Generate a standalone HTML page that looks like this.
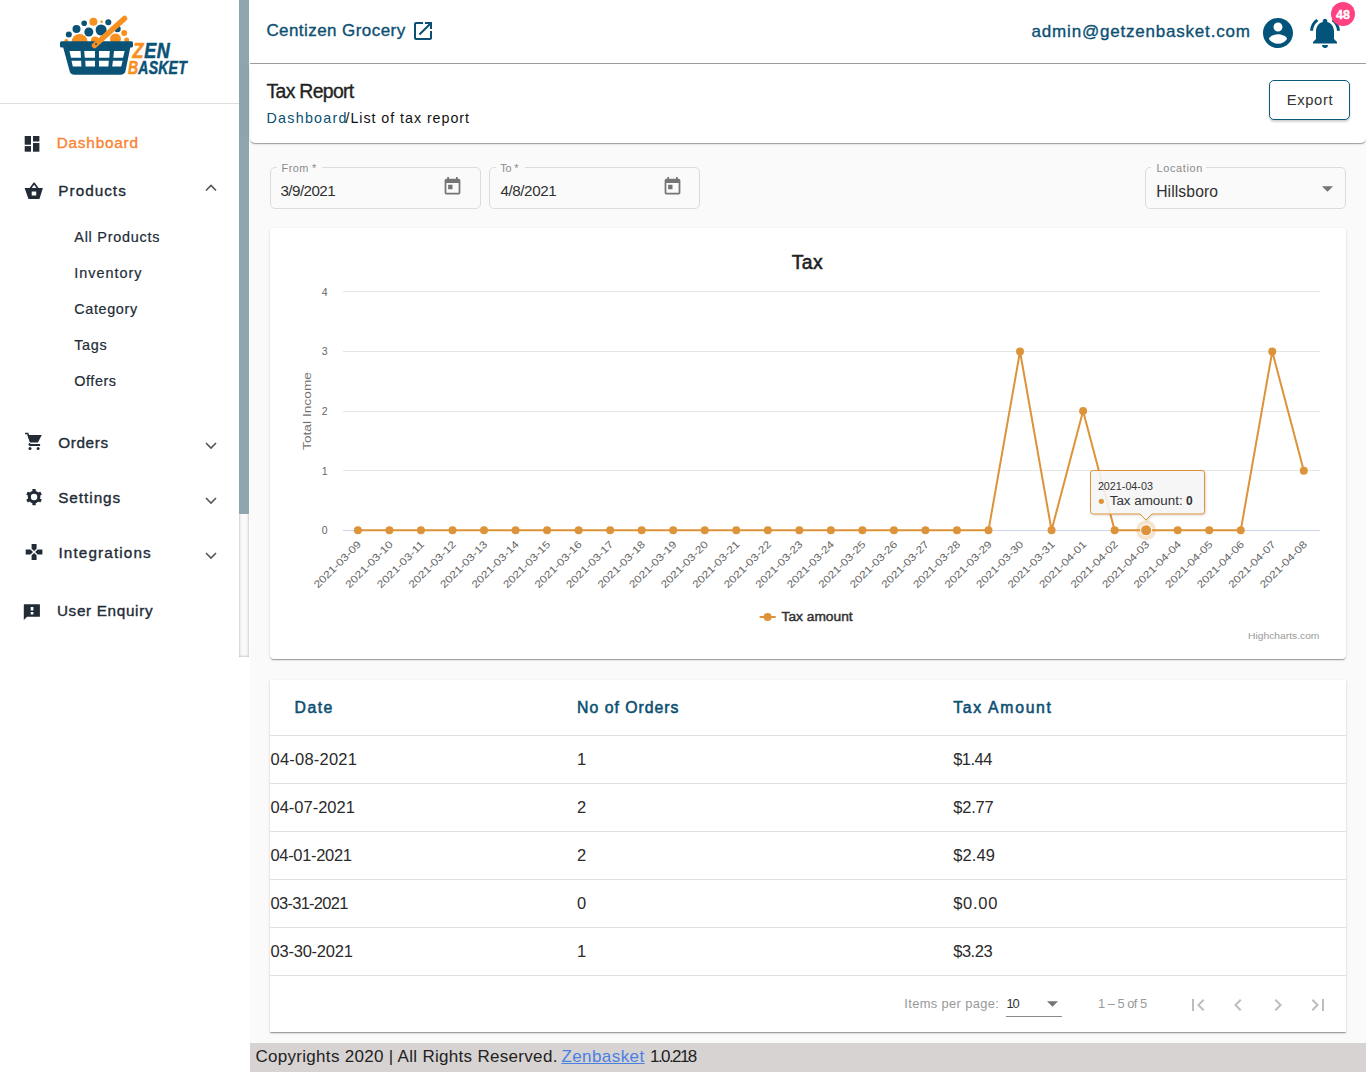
<!DOCTYPE html>
<html><head><meta charset="utf-8"><title>Tax Report</title>
<style>
html,body{margin:0;padding:0;width:1366px;height:1072px;overflow:hidden;background:#fafafa;font-family:"Liberation Sans",sans-serif;}
.t{position:absolute;line-height:0;white-space:nowrap;}
.abs{position:absolute;}
#sidebar{position:absolute;left:0;top:0;width:250px;height:1072px;background:#fff;}
#sbdiv{position:absolute;left:0;top:103px;width:239px;height:1px;background:#dedede;}
#sbtrack{position:absolute;left:239px;top:0;width:10px;height:657px;background:#fafafa;box-shadow:inset 0 0 3px rgba(0,0,0,.35);}
#sbthumb{position:absolute;left:239px;top:0;width:10px;height:514px;background:#90a4ae;}
#header{position:absolute;left:250px;top:0;width:1116px;height:63px;background:#fff;border-bottom:1px solid #9e9e9e;}
#taxcard{position:absolute;left:250px;top:64px;width:1116px;height:79px;background:#fff;border-radius:0 0 5px 5px;box-shadow:0 2px 1px -1px rgba(0,0,0,.2),0 1px 1px 0 rgba(0,0,0,.14),0 1px 3px 0 rgba(0,0,0,.12);}
#export{position:absolute;left:1269px;top:80px;width:79px;height:38px;border:1px solid #0b5a7e;border-radius:5px;background:#fff;box-shadow:0 2px 2px rgba(0,0,0,.18);}
.field{position:absolute;top:167px;height:40px;border:1px solid #dcdcdc;border-radius:5px;}
.gap{position:absolute;top:163px;height:8px;background:#fafafa;}
.card{position:absolute;background:#fff;border-radius:4px;box-shadow:0 2px 1px -1px rgba(0,0,0,.2),0 1px 1px 0 rgba(0,0,0,.14),0 1px 3px 0 rgba(0,0,0,.12);}
.rowline{position:absolute;left:270px;width:1076px;height:1px;background:#e0e0e0;}
#footer{position:absolute;left:250px;top:1043px;width:1116px;height:29px;background:#d7d3d3;}
</style></head><body>
<div id="sidebar">
  <svg class="abs" style="left:55px;top:10px" width="140" height="70" viewBox="0 0 140 70">
    <g fill="#0b5277">
      <circle cx="13.8" cy="24.6" r="3"/><circle cx="21.5" cy="19" r="4"/><circle cx="29.2" cy="13.3" r="2.8"/>
      <circle cx="33.8" cy="22" r="4.5"/><circle cx="46.1" cy="20" r="5.5"/><circle cx="53.3" cy="12.3" r="3"/><circle cx="62.5" cy="19" r="3.2"/>
    </g>
    <g fill="#f7901e">
      <circle cx="38.4" cy="11.8" r="4"/><circle cx="46.6" cy="11.8" r="1.3"/><circle cx="24.6" cy="32" r="8"/>
      <circle cx="40" cy="30.5" r="4"/><circle cx="60.5" cy="29" r="5.5"/><circle cx="69.2" cy="23" r="3"/><circle cx="71.7" cy="30" r="2.5"/><circle cx="11.3" cy="31" r="2"/>
    </g>
    <path fill="#0b5277" d="M6.5 31.3 H76.5 Q78 31.3 78 33 V36 Q78 37.5 76.5 37.5 H75.3 L70.5 61 Q69.5 64.8 65.5 64.8 H19.5 Q15.5 64.8 14.6 61 L8.2 37.5 H6.5 Q5 37.5 5 36 V33 Q5 31.3 6.5 31.3 Z"/>
    <g fill="#fff">
      <path d="M14.5 41 H25.6 L26 47.7 H16 Z"/><path d="M29.2 41 H40 V47.7 H29.8 Z"/><path d="M44 41 H54.8 L54.3 47.7 H44 Z"/><path d="M59 41 H69.7 L68 47.7 H58.3 Z"/>
      <path d="M16.5 50.7 H26.1 L26.5 56.4 H17.8 Z"/><path d="M30.2 50.7 H40 V56.4 H30.6 Z"/><path d="M44 50.7 H53.8 L53.4 56.4 H44 Z"/><path d="M57.9 50.7 H67.6 L66.2 56.4 H57.2 Z"/>
    </g>
    <path d="M39.5 35.5 L69.5 8.5" stroke="#f7901e" stroke-width="5.5" stroke-linecap="round"/>
    <circle cx="41" cy="34" r="1" fill="#0b5277"/>
    <g font-family="Liberation Sans" font-weight="bold" font-style="italic">
      <text x="0" y="0" transform="translate(77.5 48.3) scale(0.8 1)" font-size="22.5" fill="#0b5277" stroke="#0b5277" stroke-width="0.6" letter-spacing="0.8"><tspan fill="#f7901e" stroke="#f7901e">Z</tspan>EN</text>
      <text x="0" y="0" transform="translate(73 63.6) scale(0.8 1)" font-size="17.5" fill="#0b5277" stroke="#0b5277" stroke-width="0.5" letter-spacing="0.3"><tspan fill="#f7901e" stroke="#f7901e">B</tspan>ASKET</text>
    </g>
  </svg>
  <div id="sbdiv"></div>
  <!-- icons -->
  <svg class="abs" style="left:0;top:0" width="250" height="660" viewBox="0 0 250 660">
   <g fill="#222b36">
    <rect x="24.7" y="136" width="6.3" height="8.7"/><rect x="24.7" y="146.1" width="6.3" height="5.6"/>
    <rect x="33" y="136" width="6.4" height="5.5"/><rect x="33" y="143" width="6.4" height="8.7"/>
    <path d="M24.6 188.1 H42.9 L39.6 198.4 Q39.4 199.1 38.7 199.1 H29.2 Q28.5 199.1 28.3 198.4 Z M31.7 191.6 V195.5 H36.2 V191.6 Z" fill-rule="evenodd"/>
    <path d="M30.3 188.6 L34.1 183.3 L37.9 188.6" fill="none" stroke="#222b36" stroke-width="1.7" stroke-linejoin="round"/>
    <path d="M25 433.6 H27.8 L30.6 441.8" fill="none" stroke="#222b36" stroke-width="1.5"/>
    <path d="M27.3 435 H41.8 L37.9 442.4 H30 Z"/>
    <path d="M30 442.8 Q28.3 443.2 28.4 444.6 Q28.6 445.9 30 445.9 H40.1 V443.9 H30.4 Z"/>
    <circle cx="30" cy="448.6" r="1.5"/><circle cx="38.1" cy="448.6" r="1.5"/>
    <path d="M31.6 544.1 H36.6 V548.7 L34.1 551.1 L31.6 548.7 Z M42.4 549.4 V554.6 H37.6 L35.1 552 L37.6 549.4 Z M36.6 559.9 H31.6 V555.3 L34.1 552.9 L36.6 555.3 Z M25.7 554.6 V549.4 H30.5 L33 552 L30.5 554.6 Z"/>
    <path d="M24.6 604.2 H39.4 Q39.9 604.2 39.9 604.8 V616.3 Q39.9 616.8 39.4 616.8 H27.1 L23.8 620.1 V604.8 Q23.8 604.2 24.6 604.2 Z M30.7 607 V610.5 H33.4 V607 Z M30.7 611.9 V614.5 H33.4 V611.9 Z" fill-rule="evenodd"/>
   </g>
   <g transform="translate(34.05 497.05)" fill="#222b36">
    <circle r="6.3"/>
    <rect x="-1.7" y="-8.1" width="3.4" height="16.2" rx="0.4"/>
    <rect x="-1.7" y="-8.1" width="3.4" height="16.2" rx="0.4" transform="rotate(60)"/>
    <rect x="-1.7" y="-8.1" width="3.4" height="16.2" rx="0.4" transform="rotate(120)"/>
    <circle r="3.2" fill="#fff"/>
   </g>
  </svg>
  <!-- chevrons -->
  <svg class="abs" style="left:204px;top:182px" width="14" height="10" viewBox="0 0 14 10"><path d="M2 8.5 L7 3.5 L12 8.5" fill="none" stroke="#555" stroke-width="1.6"/></svg>
  <svg class="abs" style="left:204px;top:440px" width="14" height="10" viewBox="0 0 14 10"><path d="M2 3 L7 8 L12 3" fill="none" stroke="#555" stroke-width="1.6"/></svg>
  <svg class="abs" style="left:204px;top:495px" width="14" height="10" viewBox="0 0 14 10"><path d="M2 3 L7 8 L12 3" fill="none" stroke="#555" stroke-width="1.6"/></svg>
  <svg class="abs" style="left:204px;top:550px" width="14" height="10" viewBox="0 0 14 10"><path d="M2 3 L7 8 L12 3" fill="none" stroke="#555" stroke-width="1.6"/></svg>
</div>
<div id="sbtrack"></div>
<div id="sbthumb"></div>

<div id="header"></div>
<svg class="abs" style="left:411px;top:19px" width="24" height="24" viewBox="0 0 24 24"><path fill="#0b4f72" d="M19 19H5V5h7V3H5a2 2 0 0 0-2 2v14a2 2 0 0 0 2 2h14c1.1 0 2-.9 2-2v-7h-2v7zM14 3v2h3.59l-9.83 9.83 1.41 1.41L19 6.41V10h2V3h-7z"/></svg>
<svg class="abs" style="left:1260px;top:15px" width="36" height="36" viewBox="0 0 24 24"><path fill="#02547b" d="M12 2C6.48 2 2 6.48 2 12s4.48 10 10 10 10-4.48 10-10S17.52 2 12 2zm0 3c1.66 0 3 1.34 3 3s-1.34 3-3 3-3-1.34-3-3 1.34-3 3-3zm0 14.2c-2.5 0-4.71-1.28-6-3.22.03-1.99 4-3.08 6-3.08 1.99 0 5.97 1.09 6 3.08-1.29 1.94-3.5 3.22-6 3.22z"/></svg>
<svg class="abs" style="left:1307px;top:15.2px" width="36" height="36" viewBox="0 0 24 24"><path fill="#02547b" d="M7.58 4.08L6.15 2.65C3.75 4.48 2.17 7.3 2.03 10.5h2a8.445 8.445 0 0 1 3.55-6.42zm12.39 6.42h2c-.15-3.2-1.73-6.02-4.12-7.85l-1.42 1.43a8.495 8.495 0 0 1 3.54 6.42zM18 11c0-3.07-1.64-5.64-4.5-6.32V4c0-.83-.67-1.5-1.5-1.5s-1.5.67-1.5 1.5v.68C7.63 5.36 6 7.92 6 11v5l-2 2v1h16v-1l-2-2v-5zm-6 11c.14 0 .27-.01.4-.04.65-.14 1.18-.58 1.44-1.18.1-.24.15-.5.15-.78h-4c.01 1.1.9 2 2.01 2z"/></svg>
<div class="abs" style="left:1331px;top:2px;width:24px;height:24px;border-radius:12px;background:#ff4081;"></div>
<div class="t" style="left:1331px;top:14.5px;width:24px;text-align:center;font-size:12.5px;font-weight:bold;color:#fff;-webkit-text-stroke:0.4px #fff;">48</div>

<div id="taxcard"></div>
<div id="export"></div>

<div class="field" style="left:270px;width:209px;"></div>
<div class="gap" style="left:277px;width:45px;"></div>
<div class="field" style="left:489px;width:209px;"></div>
<div class="gap" style="left:496px;width:29px;"></div>
<div class="field" style="left:1145px;width:199px;"></div>
<div class="gap" style="left:1151px;width:55px;"></div>
<svg class="abs" style="left:442px;top:176px" width="21" height="21" viewBox="0 0 24 24"><path fill="#757575" d="M19 3h-1V1h-2v2H8V1H6v2H5c-1.11 0-1.99.9-1.99 2L3 19a2 2 0 0 0 2 2h14c1.1 0 2-.9 2-2V5c0-1.1-.9-2-2-2zm0 16H5V8h14v11zM7 10h5v5H7z"/></svg>
<svg class="abs" style="left:662px;top:176px" width="21" height="21" viewBox="0 0 24 24"><path fill="#757575" d="M19 3h-1V1h-2v2H8V1H6v2H5c-1.11 0-1.99.9-1.99 2L3 19a2 2 0 0 0 2 2h14c1.1 0 2-.9 2-2V5c0-1.1-.9-2-2-2zm0 16H5V8h14v11zM7 10h5v5H7z"/></svg>
<svg class="abs" style="left:1322px;top:186px" width="11" height="6" viewBox="0 0 10 5"><path fill="#757575" d="M0 0 L10 0 L5 5 Z"/></svg>

<div class="card" style="left:270px;top:228px;width:1076px;height:431px;"></div>
<svg class="abs" style="left:0;top:0" width="1366" height="1072" viewBox="0 0 1366 1072" font-family="Liberation Sans">
<path d="M343 470.5 H1320" stroke="#e6e6e6" stroke-width="1"/>
<path d="M343 411.5 H1320" stroke="#e6e6e6" stroke-width="1"/>
<path d="M343 351.5 H1320" stroke="#e6e6e6" stroke-width="1"/>
<path d="M343 291.5 H1320" stroke="#e6e6e6" stroke-width="1"/>
<path d="M343 530.5 H1320" stroke="#ccd6eb" stroke-width="1"/>
<text x="327.7" y="534.1" text-anchor="end" font-size="10.5" fill="#666">0</text>
<text x="327.7" y="474.5" text-anchor="end" font-size="10.5" fill="#666">1</text>
<text x="327.7" y="414.9" text-anchor="end" font-size="10.5" fill="#666">2</text>
<text x="327.7" y="355.3" text-anchor="end" font-size="10.5" fill="#666">3</text>
<text x="327.7" y="295.7" text-anchor="end" font-size="10.5" fill="#666">4</text>
<text transform="translate(311 411) rotate(-90)" x="0" y="0" text-anchor="middle" font-size="11.5" fill="#707070" textLength="78" lengthAdjust="spacingAndGlyphs">Total Income</text>
<text x="791.8" y="0" font-size="1" fill="none"></text>
<polyline points="357.90,530.30 389.43,530.30 420.96,530.30 452.49,530.30 484.02,530.30 515.55,530.30 547.08,530.30 578.61,530.30 610.14,530.30 641.67,530.30 673.20,530.30 704.73,530.30 736.26,530.30 767.79,530.30 799.32,530.30 830.85,530.30 862.38,530.30 893.91,530.30 925.44,530.30 956.97,530.30 988.50,530.30 1020.03,351.50 1051.56,530.30 1083.09,411.10 1114.62,530.30 1146.15,530.30 1177.68,530.30 1209.21,530.30 1240.74,530.30 1272.27,351.50 1303.80,470.70" fill="none" stroke="#dd9339" stroke-width="2" stroke-linejoin="round"/>
<circle cx="357.90" cy="530.30" r="4" fill="#dd9339"/>
<circle cx="389.43" cy="530.30" r="4" fill="#dd9339"/>
<circle cx="420.96" cy="530.30" r="4" fill="#dd9339"/>
<circle cx="452.49" cy="530.30" r="4" fill="#dd9339"/>
<circle cx="484.02" cy="530.30" r="4" fill="#dd9339"/>
<circle cx="515.55" cy="530.30" r="4" fill="#dd9339"/>
<circle cx="547.08" cy="530.30" r="4" fill="#dd9339"/>
<circle cx="578.61" cy="530.30" r="4" fill="#dd9339"/>
<circle cx="610.14" cy="530.30" r="4" fill="#dd9339"/>
<circle cx="641.67" cy="530.30" r="4" fill="#dd9339"/>
<circle cx="673.20" cy="530.30" r="4" fill="#dd9339"/>
<circle cx="704.73" cy="530.30" r="4" fill="#dd9339"/>
<circle cx="736.26" cy="530.30" r="4" fill="#dd9339"/>
<circle cx="767.79" cy="530.30" r="4" fill="#dd9339"/>
<circle cx="799.32" cy="530.30" r="4" fill="#dd9339"/>
<circle cx="830.85" cy="530.30" r="4" fill="#dd9339"/>
<circle cx="862.38" cy="530.30" r="4" fill="#dd9339"/>
<circle cx="893.91" cy="530.30" r="4" fill="#dd9339"/>
<circle cx="925.44" cy="530.30" r="4" fill="#dd9339"/>
<circle cx="956.97" cy="530.30" r="4" fill="#dd9339"/>
<circle cx="988.50" cy="530.30" r="4" fill="#dd9339"/>
<circle cx="1020.03" cy="351.50" r="4" fill="#dd9339"/>
<circle cx="1051.56" cy="530.30" r="4" fill="#dd9339"/>
<circle cx="1083.09" cy="411.10" r="4" fill="#dd9339"/>
<circle cx="1114.62" cy="530.30" r="4" fill="#dd9339"/>
<circle cx="1177.68" cy="530.30" r="4" fill="#dd9339"/>
<circle cx="1209.21" cy="530.30" r="4" fill="#dd9339"/>
<circle cx="1240.74" cy="530.30" r="4" fill="#dd9339"/>
<circle cx="1272.27" cy="351.50" r="4" fill="#dd9339"/>
<circle cx="1303.80" cy="470.70" r="4" fill="#dd9339"/>
<circle cx="1146.15" cy="530.30" r="10" fill="#dd9339" fill-opacity="0.25"/>
<circle cx="1146.15" cy="530.30" r="5.5" fill="#dd9339" stroke="#fff" stroke-width="1"/>
<text transform="translate(361.90 545) rotate(-45)" x="0" y="0" text-anchor="end" font-size="10.2" fill="#666" textLength="62" lengthAdjust="spacingAndGlyphs">2021-03-09</text>
<text transform="translate(393.43 545) rotate(-45)" x="0" y="0" text-anchor="end" font-size="10.2" fill="#666" textLength="62" lengthAdjust="spacingAndGlyphs">2021-03-10</text>
<text transform="translate(424.96 545) rotate(-45)" x="0" y="0" text-anchor="end" font-size="10.2" fill="#666" textLength="62" lengthAdjust="spacingAndGlyphs">2021-03-11</text>
<text transform="translate(456.49 545) rotate(-45)" x="0" y="0" text-anchor="end" font-size="10.2" fill="#666" textLength="62" lengthAdjust="spacingAndGlyphs">2021-03-12</text>
<text transform="translate(488.02 545) rotate(-45)" x="0" y="0" text-anchor="end" font-size="10.2" fill="#666" textLength="62" lengthAdjust="spacingAndGlyphs">2021-03-13</text>
<text transform="translate(519.55 545) rotate(-45)" x="0" y="0" text-anchor="end" font-size="10.2" fill="#666" textLength="62" lengthAdjust="spacingAndGlyphs">2021-03-14</text>
<text transform="translate(551.08 545) rotate(-45)" x="0" y="0" text-anchor="end" font-size="10.2" fill="#666" textLength="62" lengthAdjust="spacingAndGlyphs">2021-03-15</text>
<text transform="translate(582.61 545) rotate(-45)" x="0" y="0" text-anchor="end" font-size="10.2" fill="#666" textLength="62" lengthAdjust="spacingAndGlyphs">2021-03-16</text>
<text transform="translate(614.14 545) rotate(-45)" x="0" y="0" text-anchor="end" font-size="10.2" fill="#666" textLength="62" lengthAdjust="spacingAndGlyphs">2021-03-17</text>
<text transform="translate(645.67 545) rotate(-45)" x="0" y="0" text-anchor="end" font-size="10.2" fill="#666" textLength="62" lengthAdjust="spacingAndGlyphs">2021-03-18</text>
<text transform="translate(677.20 545) rotate(-45)" x="0" y="0" text-anchor="end" font-size="10.2" fill="#666" textLength="62" lengthAdjust="spacingAndGlyphs">2021-03-19</text>
<text transform="translate(708.73 545) rotate(-45)" x="0" y="0" text-anchor="end" font-size="10.2" fill="#666" textLength="62" lengthAdjust="spacingAndGlyphs">2021-03-20</text>
<text transform="translate(740.26 545) rotate(-45)" x="0" y="0" text-anchor="end" font-size="10.2" fill="#666" textLength="62" lengthAdjust="spacingAndGlyphs">2021-03-21</text>
<text transform="translate(771.79 545) rotate(-45)" x="0" y="0" text-anchor="end" font-size="10.2" fill="#666" textLength="62" lengthAdjust="spacingAndGlyphs">2021-03-22</text>
<text transform="translate(803.32 545) rotate(-45)" x="0" y="0" text-anchor="end" font-size="10.2" fill="#666" textLength="62" lengthAdjust="spacingAndGlyphs">2021-03-23</text>
<text transform="translate(834.85 545) rotate(-45)" x="0" y="0" text-anchor="end" font-size="10.2" fill="#666" textLength="62" lengthAdjust="spacingAndGlyphs">2021-03-24</text>
<text transform="translate(866.38 545) rotate(-45)" x="0" y="0" text-anchor="end" font-size="10.2" fill="#666" textLength="62" lengthAdjust="spacingAndGlyphs">2021-03-25</text>
<text transform="translate(897.91 545) rotate(-45)" x="0" y="0" text-anchor="end" font-size="10.2" fill="#666" textLength="62" lengthAdjust="spacingAndGlyphs">2021-03-26</text>
<text transform="translate(929.44 545) rotate(-45)" x="0" y="0" text-anchor="end" font-size="10.2" fill="#666" textLength="62" lengthAdjust="spacingAndGlyphs">2021-03-27</text>
<text transform="translate(960.97 545) rotate(-45)" x="0" y="0" text-anchor="end" font-size="10.2" fill="#666" textLength="62" lengthAdjust="spacingAndGlyphs">2021-03-28</text>
<text transform="translate(992.50 545) rotate(-45)" x="0" y="0" text-anchor="end" font-size="10.2" fill="#666" textLength="62" lengthAdjust="spacingAndGlyphs">2021-03-29</text>
<text transform="translate(1024.03 545) rotate(-45)" x="0" y="0" text-anchor="end" font-size="10.2" fill="#666" textLength="62" lengthAdjust="spacingAndGlyphs">2021-03-30</text>
<text transform="translate(1055.56 545) rotate(-45)" x="0" y="0" text-anchor="end" font-size="10.2" fill="#666" textLength="62" lengthAdjust="spacingAndGlyphs">2021-03-31</text>
<text transform="translate(1087.09 545) rotate(-45)" x="0" y="0" text-anchor="end" font-size="10.2" fill="#666" textLength="62" lengthAdjust="spacingAndGlyphs">2021-04-01</text>
<text transform="translate(1118.62 545) rotate(-45)" x="0" y="0" text-anchor="end" font-size="10.2" fill="#666" textLength="62" lengthAdjust="spacingAndGlyphs">2021-04-02</text>
<text transform="translate(1150.15 545) rotate(-45)" x="0" y="0" text-anchor="end" font-size="10.2" fill="#666" textLength="62" lengthAdjust="spacingAndGlyphs">2021-04-03</text>
<text transform="translate(1181.68 545) rotate(-45)" x="0" y="0" text-anchor="end" font-size="10.2" fill="#666" textLength="62" lengthAdjust="spacingAndGlyphs">2021-04-04</text>
<text transform="translate(1213.21 545) rotate(-45)" x="0" y="0" text-anchor="end" font-size="10.2" fill="#666" textLength="62" lengthAdjust="spacingAndGlyphs">2021-04-05</text>
<text transform="translate(1244.74 545) rotate(-45)" x="0" y="0" text-anchor="end" font-size="10.2" fill="#666" textLength="62" lengthAdjust="spacingAndGlyphs">2021-04-06</text>
<text transform="translate(1276.27 545) rotate(-45)" x="0" y="0" text-anchor="end" font-size="10.2" fill="#666" textLength="62" lengthAdjust="spacingAndGlyphs">2021-04-07</text>
<text transform="translate(1307.80 545) rotate(-45)" x="0" y="0" text-anchor="end" font-size="10.2" fill="#666" textLength="62" lengthAdjust="spacingAndGlyphs">2021-04-08</text>
<path d="M1093.2 470.5 H1202 Q1204.5 470.5 1204.5 473 V511.5 Q1204.5 514 1202 514 H1152 L1146 520 L1140 514 H1093.2 Q1090.5 514 1090.5 511.5 V473 Q1090.5 470.5 1093.2 470.5 Z" fill="rgba(247,247,247,0.88)" stroke="#dd9339" stroke-width="1" filter="url(#tsh)"/>
<defs><filter id="tsh" x="-10%" y="-10%" width="130%" height="140%"><feDropShadow dx="1" dy="1" stdDeviation="0.8" flood-opacity="0.15"/></filter></defs>
<text x="1097.9" y="489.9" font-size="10.8" fill="#333" textLength="55" lengthAdjust="spacingAndGlyphs">2021-04-03</text>
<circle cx="1101.3" cy="501.3" r="2.6" fill="#dd9339"/>
<text x="1109.7" y="505" font-size="12" fill="#333" textLength="73" lengthAdjust="spacingAndGlyphs">Tax amount:</text>
<text x="1186" y="505" font-size="12" font-weight="bold" fill="#333">0</text>
<path d="M759.6 617 H775.7" stroke="#dd9339" stroke-width="2"/>
<circle cx="767.6" cy="617" r="4" fill="#dd9339"/>
<text x="781.6" y="621.2" font-size="13" fill="#333" stroke="#333" stroke-width="0.45" textLength="71" lengthAdjust="spacingAndGlyphs">Tax amount</text>
<text x="1248.1" y="638.9" font-size="9.2" fill="#999" textLength="71.3" lengthAdjust="spacingAndGlyphs">Highcharts.com</text>
</svg>

<div class="card" style="left:270px;top:680px;width:1076px;height:352px;border-radius:0;"></div>
<div class="rowline" style="top:735px"></div>
<div class="rowline" style="top:783px"></div>
<div class="rowline" style="top:831px"></div>
<div class="rowline" style="top:879px"></div>
<div class="rowline" style="top:927px"></div>
<div class="rowline" style="top:975px"></div>
<div class="abs" style="left:1006px;top:1016px;width:56px;height:1px;background:#8a8a8a"></div>
<svg class="abs" style="left:1047px;top:1001px" width="11" height="6" viewBox="0 0 10 5"><path fill="#757575" d="M0 0 L10 0 L5 5 Z"/></svg>
<svg class="abs" style="left:1186px;top:993px" width="24" height="24" viewBox="0 0 24 24"><path fill="#bdbdbd" d="M18.41 16.59L13.82 12l4.59-4.59L17 6l-6 6 6 6zM6 6h2v12H6z"/></svg>
<svg class="abs" style="left:1226px;top:993px" width="24" height="24" viewBox="0 0 24 24"><path fill="#bdbdbd" d="M15.41 7.41L14 6l-6 6 6 6 1.41-1.41L10.83 12z"/></svg>
<svg class="abs" style="left:1266px;top:993px" width="24" height="24" viewBox="0 0 24 24"><path fill="#bdbdbd" d="M10 6L8.59 7.41 13.17 12l-4.58 4.59L10 18l6-6z"/></svg>
<svg class="abs" style="left:1306px;top:993px" width="24" height="24" viewBox="0 0 24 24"><path fill="#bdbdbd" d="M5.59 7.41L10.18 12l-4.59 4.59L7 18l6-6-6-6zM16 6h2v12h-2z"/></svg>

<div id="footer"></div>
<div id="s_dash" class="t" style="left:56.7px;top:143.25px;font-size:15.3px;color:#fa8230;letter-spacing:0.812px;-webkit-text-stroke:0.35px currentColor;">Dashboard</div>
<div id="s_prod" class="t" style="left:58.3px;top:191.45px;font-size:15.3px;color:#222b36;letter-spacing:1.016px;-webkit-text-stroke:0.35px currentColor;">Products</div>
<div id="s_allp" class="t" style="left:74.3px;top:237.26px;font-size:14.4px;color:#222b36;letter-spacing:0.751px;-webkit-text-stroke:0.2px currentColor;">All Products</div>
<div id="s_inv" class="t" style="left:74.3px;top:273.36px;font-size:14.4px;color:#222b36;letter-spacing:1.000px;-webkit-text-stroke:0.2px currentColor;">Inventory</div>
<div id="s_cat" class="t" style="left:74.3px;top:309.16px;font-size:14.4px;color:#222b36;letter-spacing:0.634px;-webkit-text-stroke:0.2px currentColor;">Category</div>
<div id="s_tags" class="t" style="left:74.3px;top:345.16px;font-size:14.4px;color:#222b36;letter-spacing:0.632px;-webkit-text-stroke:0.2px currentColor;">Tags</div>
<div id="s_off" class="t" style="left:74.3px;top:380.96px;font-size:14.4px;color:#222b36;letter-spacing:0.560px;-webkit-text-stroke:0.2px currentColor;">Offers</div>
<div id="s_ord" class="t" style="left:58.2px;top:443.04px;font-size:15.3px;color:#222b36;letter-spacing:0.620px;-webkit-text-stroke:0.35px currentColor;">Orders</div>
<div id="s_set" class="t" style="left:58.2px;top:498.14px;font-size:15.3px;color:#222b36;letter-spacing:0.969px;-webkit-text-stroke:0.35px currentColor;">Settings</div>
<div id="s_int" class="t" style="left:58.4px;top:552.85px;font-size:15.3px;color:#222b36;letter-spacing:1.125px;-webkit-text-stroke:0.35px currentColor;">Integrations</div>
<div id="s_ue" class="t" style="left:56.9px;top:611.04px;font-size:15.3px;color:#222b36;letter-spacing:0.660px;-webkit-text-stroke:0.35px currentColor;">User Enquiry</div>
<div id="h_cg" class="t" style="left:266.4px;top:31.25px;font-size:17.0px;color:#0b4f72;letter-spacing:0.432px;-webkit-text-stroke:0.35px currentColor;">Centizen Grocery</div>
<div id="h_em" class="t" style="left:1031.6px;top:31.65px;font-size:17.0px;color:#0b4f72;letter-spacing:0.797px;-webkit-text-stroke:0.35px currentColor;">admin@getzenbasket.com</div>
<div id="t_tr" class="t" style="left:266.5px;top:91.31px;font-size:19.4px;color:#222;letter-spacing:-0.673px;-webkit-text-stroke:0.35px currentColor;">Tax Report</div>
<div id="t_bd" class="t" style="left:266.5px;top:117.90px;font-size:14.3px;color:#0b4f72;letter-spacing:1.250px;">Dashboard</div>
<div id="t_bl" class="t" style="left:345.5px;top:117.90px;font-size:14.3px;color:#111;letter-spacing:0.945px;">/List of tax report</div>
<div id="t_ex" class="t" style="left:1286.8px;top:100.02px;font-size:14.8px;color:#333;letter-spacing:0.600px;">Export</div>
<div id="f_from" class="t" style="left:281.6px;top:168.09px;font-size:10.9px;color:#8a8a8a;letter-spacing:0.400px;">From *</div>
<div id="f_fv" class="t" style="left:280.5px;top:191.38px;font-size:15.2px;color:#303030;letter-spacing:-0.572px;">3/9/2021</div>
<div id="f_to" class="t" style="left:500.2px;top:168.09px;font-size:10.9px;color:#8a8a8a;letter-spacing:-0.166px;">To *</div>
<div id="f_tv" class="t" style="left:500.5px;top:191.38px;font-size:15.2px;color:#303030;letter-spacing:-0.429px;">4/8/2021</div>
<div id="f_loc" class="t" style="left:1156.5px;top:168.09px;font-size:10.9px;color:#8a8a8a;letter-spacing:0.652px;">Location</div>
<div id="f_lv" class="t" style="left:1156.2px;top:191.60px;font-size:15.7px;color:#303030;letter-spacing:0.100px;">Hillsboro</div>
<div id="c_title" class="t" style="left:791.8px;top:262.41px;font-size:19.4px;color:#222;letter-spacing:0.300px;-webkit-text-stroke:0.55px currentColor;">Tax</div>
<div id="tb_h1" class="t" style="left:294.6px;top:707.57px;font-size:15.8px;color:#0b4f72;letter-spacing:1.437px;-webkit-text-stroke:0.55px currentColor;">Date</div>
<div id="tb_h2" class="t" style="left:577.1px;top:707.57px;font-size:15.8px;color:#0b4f72;letter-spacing:0.994px;-webkit-text-stroke:0.55px currentColor;">No of Orders</div>
<div id="tb_h3" class="t" style="left:953.2px;top:707.57px;font-size:15.8px;color:#0b4f72;letter-spacing:1.694px;-webkit-text-stroke:0.55px currentColor;">Tax Amount</div>
<div id="tb_d0" class="t" style="left:270.5px;top:759.02px;font-size:16.5px;color:#2a2a2a;letter-spacing:0.222px;">04-08-2021</div>
<div id="tb_n0" class="t" style="left:577.0px;top:759.02px;font-size:16.5px;color:#2a2a2a;letter-spacing:0.000px;">1</div>
<div id="tb_t0" class="t" style="left:953.2px;top:759.02px;font-size:16.5px;color:#2a2a2a;letter-spacing:-0.500px;">$1.44</div>
<div id="tb_d1" class="t" style="left:270.5px;top:807.02px;font-size:16.5px;color:#2a2a2a;letter-spacing:0.000px;">04-07-2021</div>
<div id="tb_n1" class="t" style="left:577.0px;top:807.02px;font-size:16.5px;color:#2a2a2a;letter-spacing:0.000px;">2</div>
<div id="tb_t1" class="t" style="left:953.2px;top:807.02px;font-size:16.5px;color:#2a2a2a;letter-spacing:-0.175px;">$2.77</div>
<div id="tb_d2" class="t" style="left:270.5px;top:855.02px;font-size:16.5px;color:#2a2a2a;letter-spacing:-0.334px;">04-01-2021</div>
<div id="tb_n2" class="t" style="left:577.0px;top:855.02px;font-size:16.5px;color:#2a2a2a;letter-spacing:0.000px;">2</div>
<div id="tb_t2" class="t" style="left:953.2px;top:855.02px;font-size:16.5px;color:#2a2a2a;letter-spacing:0.100px;">$2.49</div>
<div id="tb_d3" class="t" style="left:270.5px;top:903.02px;font-size:16.5px;color:#2a2a2a;letter-spacing:-0.722px;">03-31-2021</div>
<div id="tb_n3" class="t" style="left:577.0px;top:903.02px;font-size:16.5px;color:#2a2a2a;letter-spacing:0.000px;">0</div>
<div id="tb_t3" class="t" style="left:953.2px;top:903.02px;font-size:16.5px;color:#2a2a2a;letter-spacing:0.750px;">$0.00</div>
<div id="tb_d4" class="t" style="left:270.5px;top:951.02px;font-size:16.5px;color:#2a2a2a;letter-spacing:-0.222px;">03-30-2021</div>
<div id="tb_n4" class="t" style="left:577.0px;top:951.02px;font-size:16.5px;color:#2a2a2a;letter-spacing:0.000px;">1</div>
<div id="tb_t4" class="t" style="left:953.2px;top:951.02px;font-size:16.5px;color:#2a2a2a;letter-spacing:-0.475px;">$3.23</div>
<div id="p_ipp" class="t" style="left:904.3px;top:1003.59px;font-size:12.9px;color:#999;letter-spacing:0.360px;">Items per page:</div>
<div id="p_10" class="t" style="left:1006.4px;top:1003.59px;font-size:12.9px;color:#333;letter-spacing:-1.000px;">10</div>
<div id="p_of" class="t" style="left:1098.0px;top:1003.59px;font-size:12.9px;color:#999;letter-spacing:-0.514px;">1 – 5 of 5</div>
<div id="ft1" class="t" style="left:255.4px;top:1056.85px;font-size:17.0px;color:#222;letter-spacing:0.304px;">Copyrights 2020 | All Rights Reserved.</div>
<div id="ft_link" class="t" style="left:561.4px;top:1056.85px;font-size:17.0px;color:#4a80e2;letter-spacing:0.425px;text-decoration:underline;">Zenbasket</div>
<div id="ft_ver" class="t" style="left:650.0px;top:1056.85px;font-size:17.0px;color:#222;letter-spacing:-1.570px;">1.0.218</div>
</body></html>
